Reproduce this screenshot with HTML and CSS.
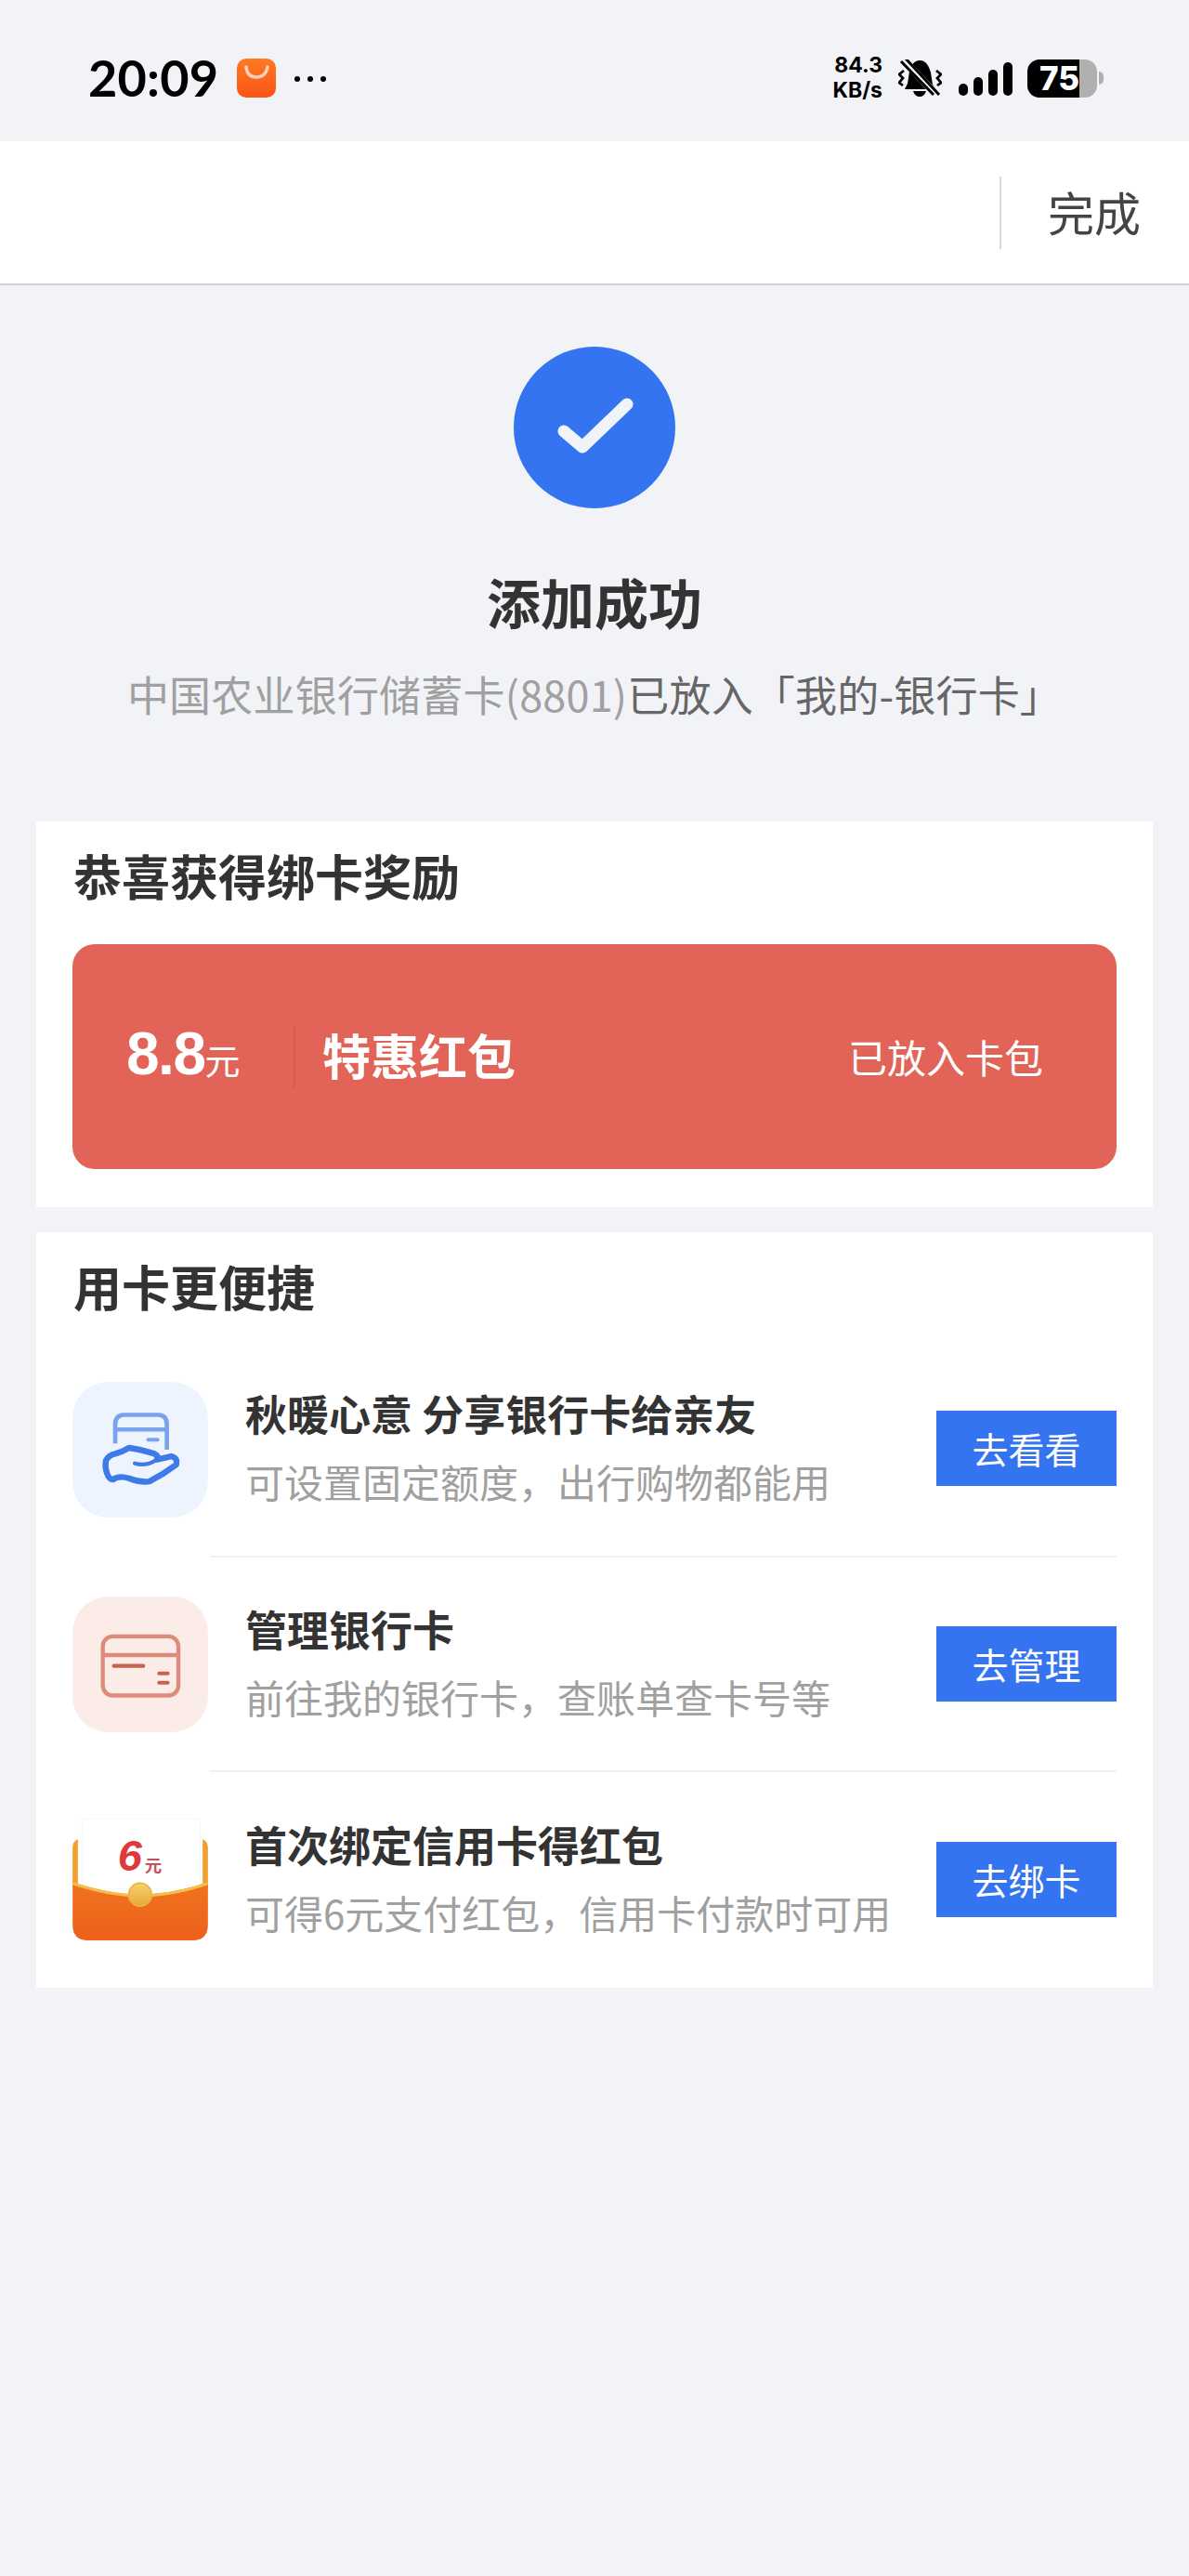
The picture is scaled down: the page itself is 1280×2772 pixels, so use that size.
FILE: index.html
```html
<!DOCTYPE html>
<html lang="zh-CN">
<head>
  <meta charset="UTF-8">
  <meta name="viewport" content="width=device-width, initial-scale=1.0">
  <title>添加成功</title>
  <link rel="stylesheet" href="styles.css">
</head>
<body>
  <div class="status">
    <div class="time">20:09</div>
    <svg class="app-icon" viewBox="0 0 42 42">
      <defs>
        <linearGradient id="appGrad" x1="0" y1="0" x2="0" y2="1">
          <stop offset="0" stop-color="#ff7a22"/>
          <stop offset="1" stop-color="#fb5316"/>
        </linearGradient>
      </defs>
      <rect width="42" height="42" rx="10" fill="url(#appGrad)"/>
      <path d="M10 9 Q11 20 21 20 Q31 20 33 9" fill="none" stroke="#fbd2b8" stroke-width="3.4" stroke-linecap="round"/>
    </svg>
    <div class="dots"><span></span><span></span><span></span></div>
    <div class="status-right">
      <div class="speed">84.3<br>KB/s</div>
      <svg class="bell" viewBox="0 0 47 40">
        <path d="M23 1 C30 1 33 7 35 14 L37 27 L40 32 H7 L10 26 L12 13 C14 6 17 1 23 1 Z" fill="#000"/>
        <path d="M16 34 H30 Q28 40 23 40 Q18 40 16 34 Z" fill="#000"/>
        <path d="M5 0 L43 40" stroke="#f1f3f7" stroke-width="8"/>
        <path d="M3 2 L38 38 M8 -1 L44 38" stroke="#000" stroke-width="3" fill="none"/>
        <path d="M6 12 L1 16 L5 20 L1 25 L5 28 M41 12 L46 16 L42 20 L46 25 L42 28" stroke="#000" stroke-width="2.8" fill="none"/>
      </svg>
      <div class="signal">
        <span class="bar-1"></span><span class="bar-2"></span><span class="bar-3"></span><span class="bar-4"></span>
      </div>
      <div class="battery">
        <div class="battery-body"><span>75</span></div>
        <div class="battery-nub"></div>
      </div>
    </div>
  </div>

  <div class="nav">
    <div class="done">完成</div>
  </div>

  <div class="result">
    <svg class="check" viewBox="0 0 174 174">
      <circle cx="87" cy="87" r="87" fill="#3574f0"/>
      <path d="M54 91 L74 108 L122 62" fill="none" stroke="#f0f3f8" stroke-width="13" stroke-linecap="round" stroke-linejoin="round"/>
    </svg>
    <div class="result-title">添加成功</div>
    <div class="result-desc">中国农业银行储蓄卡(8801)<span class="result-desc-dark">已放入「我的-银行卡」</span></div>
  </div>

  <div class="card card-reward">
    <div class="card-title">恭喜获得绑卡奖励</div>
    <div class="packet">
      <div class="packet-amount">8.8<span>元</span></div>
      <div class="packet-name">特惠红包</div>
      <div class="packet-state">已放入卡包</div>
    </div>
  </div>

  <div class="card card-list">
    <div class="card-title card-title-list">用卡更便捷</div>

    <div class="row">
      <svg class="row-icon" viewBox="55 52 435 436">
        <rect x="55" y="52" width="435" height="436" rx="115" fill="#eef4fd"/>
        <path d="M192 250 V188 Q192 158 222 158 H328 Q358 158 358 188 V270" fill="none" stroke="#7aa3ee" stroke-width="14"/>
        <path d="M192 205 H358" stroke="#7aa3ee" stroke-width="14"/>
        <path d="M298 238 H328" stroke="#7aa3ee" stroke-width="12" stroke-linecap="round"/>
        <path d="M162 305 Q170 288 192 283 Q215 277 236 264 Q270 268 318 283 Q334 292 326 302 Q350 296 372 291 Q394 296 388 318 Q345 350 302 372 Q270 376 236 362 Q205 352 185 366 Q172 366 165 345 Q158 325 162 305 Z" fill="#eef4fd" stroke="#3f7be8" stroke-width="19" stroke-linejoin="round"/>
        <path d="M255 314 Q290 325 326 302" fill="none" stroke="#3f7be8" stroke-width="13" stroke-linecap="round"/>
      </svg>
      <div class="row-body">
        <div class="row-text">
          <div class="row-title">秋暖心意 分享银行卡给亲友</div>
          <div class="row-desc">可设置固定额度，出行购物都能用</div>
        </div>
        <div class="row-btn">去看看</div>
      </div>
    </div>

    <div class="row">
      <svg class="row-icon" viewBox="55 52 435 436">
        <rect x="55" y="52" width="435" height="436" rx="115" fill="#fbece8"/>
        <rect x="152" y="180" width="243" height="190" rx="32" fill="none" stroke="#df8b7b" stroke-width="13"/>
        <path d="M152 240 H395" stroke="#df8b7b" stroke-width="13"/>
        <path d="M188 275 H282" stroke="#c9634f" stroke-width="13" stroke-linecap="round"/>
        <path d="M333 299 H361 M333 329 H361" stroke="#c9634f" stroke-width="12" stroke-linecap="round"/>
      </svg>
      <div class="row-body">
        <div class="row-text">
          <div class="row-title">管理银行卡</div>
          <div class="row-desc">前往我的银行卡，查账单查卡号等</div>
        </div>
        <div class="row-btn">去管理</div>
      </div>
    </div>

    <div class="row">
      <svg class="row-icon" viewBox="55 33 435 436">
        <defs>
          <linearGradient id="bodyGrad" x1="0" y1="0" x2="0" y2="1">
            <stop offset="0" stop-color="#ef741f"/>
            <stop offset="1" stop-color="#ef5f1c"/>
          </linearGradient>
          <linearGradient id="coinGrad" x1="0" y1="0" x2="0" y2="1">
            <stop offset="0" stop-color="#f7d36a"/>
            <stop offset="1" stop-color="#e6a93a"/>
          </linearGradient>
        </defs>
        <path d="M55 150 Q55 125 72 120 V280 H55 Z M490 150 Q490 125 473 120 V280 H490 Z" fill="#f0a030"/>
        <path d="M85 55 H465 V280 H85 Z" fill="#fff" stroke="#f7f5f2" stroke-width="2"/>
        <text class="packet-six" x="200" y="220">6</text>
        <text class="packet-yuan" x="287" y="224">元</text>
        <path d="M55 258 Q150 290 235 296 H310 Q400 290 490 258 V395 Q490 445 440 445 H105 Q55 445 55 395 Z" fill="url(#bodyGrad)"/>
        <path d="M55 262 Q150 294 235 300 Q272 340 310 300 Q400 294 490 262" fill="none" stroke="#f2c04a" stroke-width="9"/>
        <circle cx="272" cy="298" r="37" fill="url(#coinGrad)" stroke="#eeb344" stroke-width="5"/>
      </svg>
      <div class="row-body row-body-last">
        <div class="row-text">
          <div class="row-title">首次绑定信用卡得红包</div>
          <div class="row-desc">可得6元支付红包，信用卡付款时可用</div>
        </div>
        <div class="row-btn">去绑卡</div>
      </div>
    </div>
  </div>
</body>
</html>
```

FILE: styles.css
```css
body {
  margin: 0;
  background-color: #f1f3f7;
  font-family: "Noto Sans CJK SC", "Noto Sans", sans-serif;
  color: #333;
}

/* status bar */
.status {
  height: 152px;
  padding: 16px 92px 0 95px;
  box-sizing: border-box;
  display: flex;
  align-items: center;
  color: #000;
}

.time {
  font-family: "Lato", sans-serif;
  font-size: 54px;
  font-weight: 700;
  letter-spacing: 0.2px;
  line-height: 60px;
  width: 160px;
}

.app-icon {
  width: 42px;
  height: 42px;
}

.dots {
  display: flex;
  gap: 8px;
  margin-left: 20px;
  margin-top: 2px;
}

.dots span {
  width: 6px;
  height: 6px;
  border-radius: 50%;
  background: #000;
}

.status-right {
  margin-left: auto;
  display: flex;
  align-items: center;
}

.speed {
  font-family: "Inter", sans-serif;
  font-size: 23px;
  font-weight: 700;
  line-height: 27px;
  text-align: right;
  width: 54px;
}

.bell {
  width: 47px;
  height: 40px;
  margin-left: 17px;
}

.signal {
  display: flex;
  align-items: flex-end;
  gap: 6px;
  height: 36px;
  margin-left: 18px;
  margin-top: 2px;
}

.signal span {
  width: 10px;
  background: #000;
  border-radius: 5px;
}

.signal .bar-1 { height: 13px; }
.signal .bar-2 { height: 20px; }
.signal .bar-3 { height: 28px; }
.signal .bar-4 { height: 36px; }

.battery {
  display: flex;
  align-items: center;
  margin-left: 16px;
}

.battery-body {
  width: 75px;
  height: 41px;
  border-radius: 13px;
  background: linear-gradient(to right, #000 56px, #b0b0b0 56px);
  color: #fff;
  font-family: "Inter", sans-serif;
  font-size: 35px;
  font-weight: 800;
  line-height: 41px;
  padding-left: 13px;
  box-sizing: border-box;
}

.battery-nub {
  width: 5px;
  height: 14px;
  margin-left: 2px;
  background: #b0b0b0;
  border-radius: 0 7px 7px 0;
}

/* top nav */
.nav {
  height: 153px;
  background: #fff;
  border-bottom: 2px solid #d4d4d4;
  display: flex;
  justify-content: flex-end;
  align-items: center;
}

.done {
  height: 78px;
  line-height: 74px;
  border-left: 2px solid #d8d8d8;
  padding: 0 52px 0 50px;
  font-size: 50px;
  color: #444;
}

/* result */
.result {
  padding-top: 66px;
  height: 577px;
  box-sizing: border-box;
  display: flex;
  flex-direction: column;
  align-items: center;
}

.check {
  width: 174px;
  height: 174px;
}

.result-title {
  margin-top: 60px;
  font-size: 58px;
  font-weight: 700;
  line-height: 80px;
}

.result-desc {
  margin-top: 30px;
  font-size: 45px;
  letter-spacing: 0.2px;
  line-height: 60px;
  color: #a0a0a0;
}

.result-desc-dark {
  color: #666;
}

/* cards */
.card {
  width: 1202px;
  margin-left: 39px;
  padding: 0 39px;
  box-sizing: border-box;
  background: #fff;
}

.card-reward {
  height: 415px;
  margin-bottom: 27px;
}

.card-list {
  height: 813px;
}

.card-title {
  height: 132px;
  padding-left: 1px;
  font-size: 52px;
  font-weight: 700;
  line-height: 116px;
}

.card-title-list {
  height: 118px;
}

.packet {
  height: 242px;
  padding: 0 79px 0 58px;
  display: flex;
  align-items: center;
  background: #e26459;
  border-radius: 24px;
  color: #fff;
}

.packet-amount {
  width: 180px;
  font-family: "Liberation Sans", sans-serif;
  font-size: 64px;
  letter-spacing: -1.5px;
  font-weight: 700;
  line-height: 62px;
  border-right: 2px solid #d75b50;
}

.packet-amount span {
  font-family: "Noto Sans CJK SC", sans-serif;
  font-size: 38px;
  font-weight: 400;
  letter-spacing: 0;
}

.packet-name {
  margin-left: 29px;
  margin-bottom: 6px;
  font-size: 52px;
  font-weight: 700;
}

.packet-state {
  margin-left: auto;
  margin-bottom: 2px;
  font-size: 42px;
}

/* list rows */
.row {
  display: flex;
  align-items: center;
  height: 231.5px;
}

.row-icon {
  width: 146px;
  height: 146px;
  flex-shrink: 0;
}

.row-body {
  flex: 1;
  height: 100%;
  margin-left: 2px;
  padding-left: 38px;
  display: flex;
  align-items: center;
  justify-content: space-between;
  border-bottom: 2px solid #f0f0f0;
  box-sizing: border-box;
}

.row-body-last {
  border-bottom: none;
}

.row-text {
  margin-bottom: 2px;
}

.row-title {
  font-size: 45px;
  font-weight: 700;
  line-height: 60px;
}

.row-desc {
  margin-top: 13px;
  font-size: 42px;
  line-height: 60px;
  color: #a0a0a0;
}

.row-btn {
  width: 194px;
  height: 81px;
  background: #3574f0;
  color: #fff;
  font-size: 39px;
  line-height: 81px;
  text-align: center;
}

.packet-six {
  font-family: "Liberation Sans", sans-serif;
  font-size: 140px;
  font-weight: 700;
  font-style: italic;
  fill: #de3a3e;
}

.packet-yuan {
  font-family: "Noto Sans CJK SC", sans-serif;
  font-size: 55px;
  font-weight: 700;
  fill: #c9505a;
}
```
